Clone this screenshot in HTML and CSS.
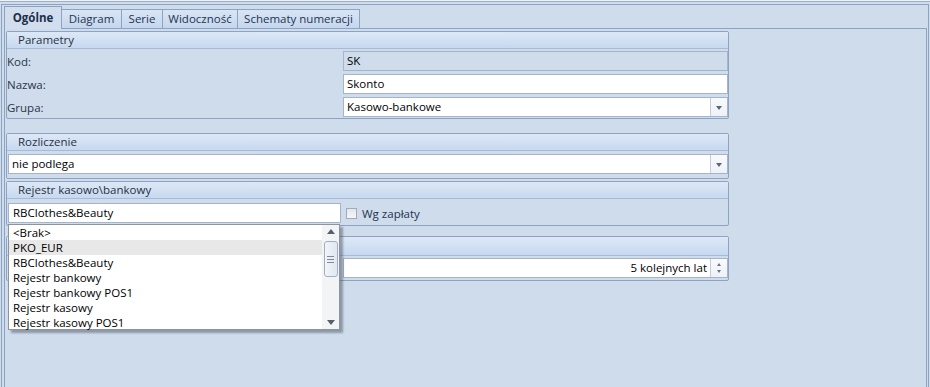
FILE: index.html
```html
<!DOCTYPE html>
<html lang="pl">
<head>
<meta charset="utf-8">
<title>Ogólne</title>
<link rel="stylesheet" href="styles.css">
</head>
<body>
<div class="topline"></div>
<div class="frame">
  <div class="tabs">
    <div class="tab active">Ogólne</div>
    <div class="tab t-diagram">Diagram</div>
    <div class="tab t-serie">Serie</div>
    <div class="tab t-widok">Widoczność</div>
    <div class="tab t-schem">Schematy numeracji</div>
  </div>
  <div class="panel">
    <section class="group g1">
      <div class="ghead">Parametry</div>
      <div class="gbody rows">
        <div class="row"><span class="lbl">Kod:</span><div class="field disabled">SK</div></div>
        <div class="row"><span class="lbl">Nazwa:</span><div class="field">Skonto</div></div>
        <div class="row"><span class="lbl">Grupa:</span><div class="field combo"><span class="val">Kasowo-bankowe</span><span class="btn"><i class="arrow"></i></span></div></div>
      </div>
    </section>
    <section class="group g2">
      <div class="ghead">Rozliczenie</div>
      <div class="gbody">
        <div class="field combo full"><span class="val">nie podlega</span><span class="btn"><i class="arrow"></i></span></div>
      </div>
    </section>
    <section class="group g3">
      <div class="ghead">Rejestr kasowo\bankowy</div>
      <div class="gbody reg">
        <div class="field half">RBClothes&amp;Beauty</div>
        <label class="check"><span class="box"></span><span class="ctext">Wg zapłaty</span></label>
      </div>
    </section>
    <section class="group g4">
      <div class="ghead">&nbsp;</div>
      <div class="gbody rows">
        <div class="row"><span class="lbl"></span><div class="field spin"><span class="val right">5 kolejnych lat</span><span class="btn spinbtn"><i class="up"></i><i class="down"></i></span></div></div>
      </div>
    </section>
  </div>
</div>
<div class="dropdown">
  <ul class="items">
    <li>&lt;Brak&gt;</li>
    <li class="hot">PKO_EUR</li>
    <li>RBClothes&amp;Beauty</li>
    <li>Rejestr bankowy</li>
    <li>Rejestr bankowy POS1</li>
    <li>Rejestr kasowy</li>
    <li>Rejestr kasowy POS1</li>
  </ul>
  <div class="sbar">
    <i class="sup"></i>
    <div class="thumb"><span></span><span></span><span></span></div>
    <i class="sdown"></i>
  </div>
</div>
</body>
</html>
```

FILE: styles.css
```css
* { box-sizing: border-box; }
html, body {
  margin: 0;
  padding: 0;
  width: 930px;
  height: 387px;
  overflow: hidden;
}
body {
  background: #cfdcec;
  font-family: "Open Sans", "Noto Sans", sans-serif;
  font-size: 11.5px;
  color: #000;
  position: relative;
}
.topline {
  height: 2px;
  background: #eef1f5;
  border-bottom: 1px solid #9eafc7;
  margin-bottom: 2px;
}
.frame {
  margin-left: 1px;
  width: 928px;
  height: 383px;
  border: 1px solid #8ea3c2;
  border-bottom: none;
  background: #cfdcec;
}
.tabs {
  display: flex;
  align-items: flex-end;
  height: 23px;
  padding-left: 2px;
}
.tab {
  height: 19px;
  line-height: 17px;
  border: 1px solid #8ea3c2;
  border-bottom: none;
  margin-left: -1px;
  background: linear-gradient(#d9e5f4, #c5d7ee);
  color: #1e3553;
  text-align: center;
  white-space: nowrap;
}
.tab.active {
  margin-left: 0;
  height: 23px;
  line-height: 21px;
  margin-bottom: -1px;
  background: #d2deee;
  position: relative;
  z-index: 2;
  font-weight: 700;
  width: 58px;
  color: #1c2f4a;
}
.t-diagram { width: 61px; }
.t-serie { width: 42px; }
.t-widok { width: 76px; }
.t-schem { width: 123px; }
.panel {
  margin: 0 1px 0 2px;
  width: 923px;
  height: 359px;
  border: 1px solid #8ea3c2;
  border-bottom: none;
  padding: 2px 1px;
  background: #cfdcec;
}
.group {
  width: 723px;
  border: 1px solid #8ea3c2;
  border-radius: 2px;
}
.ghead {
  height: 17px;
  line-height: 16px;
  padding-left: 11px;
  border-bottom: 1px solid #a9bbd4;
  background: linear-gradient(#dde8f6, #c7d9f0);
  color: #27323f;
}
.gbody { padding: 2px 0 1px 1px; }
.rows { display: flex; flex-direction: column; gap: 3px; padding-left: 0; }
.row { display: flex; align-items: center; height: 20px; }
.lbl {
  flex: 0 0 336px;
  color: #283649;
}
.field {
  height: 20px;
  line-height: 18px;
  border: 1px solid #a5b4cb;
  background: #fff;
  padding-left: 3px;
  flex: 1;
  display: flex;
  white-space: nowrap;
}
.field.disabled { background: #cfdcec; }
.combo, .spin { padding-right: 0; }
.val { flex: 1; }
.val.right { text-align: right; padding-right: 3px; }
.btn {
  flex: 0 0 17px;
  border-left: 1px solid #c3ccd8;
  background: linear-gradient(#f8fafc, #eef2f7);
  display: flex;
  align-items: center;
  justify-content: center;
}
.arrow {
  width: 0; height: 0;
  border-left: 3.5px solid transparent;
  border-right: 3.5px solid transparent;
  border-top: 4px solid #5b6674;
  margin-top: 2px;
}
.spinbtn { flex-direction: column; gap: 4px; }
.spinbtn .up {
  width: 0; height: 0;
  border-left: 2.5px solid transparent;
  border-right: 2.5px solid transparent;
  border-bottom: 3px solid #6a7583;
}
.spinbtn .down {
  width: 0; height: 0;
  border-left: 2.5px solid transparent;
  border-right: 2.5px solid transparent;
  border-top: 3px solid #6a7583;
}
.g2 { margin-top: 14px; }
.g2 .gbody { padding: 3px 0 4px 1px; }
.g3 { margin-top: 2px; }
.g3 .gbody { padding: 4px 0 2px 1px; }
.reg { display: flex; align-items: center; }
.field.half { flex: 0 0 333px; padding-left: 4px; }
.check {
  display: flex;
  align-items: center;
  margin-left: 5px;
  color: #22344f;
}
.check .box {
  width: 11px; height: 11px;
  border: 1px solid #a2aab6;
  background: linear-gradient(#e2e6ec, #f4f6f8);
  margin-right: 5px;
}
.g4 { margin-top: 10px; }
.g4 .ghead { height: 19px; }
.g4 .gbody { padding: 2px 0 2px 0; }
.dropdown {
  position: absolute;
  left: 8px;
  top: 224px;
  width: 332px;
  height: 106px;
  border: 1px solid #8f949b;
  background: #fff;
  box-shadow: 3px 3px 2px rgba(60, 70, 85, 0.45);
  display: flex;
  z-index: 5;
}
.items {
  list-style: none;
  margin: 0;
  padding: 0;
  flex: 1;
}
.items li {
  height: 15px;
  line-height: 15px;
  padding-left: 4px;
  color: #000;
  white-space: nowrap;
}
.items li.hot { background: #e8e8e8; }
.sbar {
  flex: 0 0 17px;
  background: #f3f4f6;
  display: flex;
  flex-direction: column;
  align-items: center;
}
.sup {
  margin-top: 4px;
  width: 0; height: 0;
  border-left: 4.5px solid transparent;
  border-right: 4.5px solid transparent;
  border-bottom: 5px solid #56606d;
}
.thumb {
  margin-top: 7px;
  width: 14px;
  height: 36px;
  border: 1px solid #9fb0c6;
  border-radius: 3px;
  background: linear-gradient(90deg, #f2f5f9, #e1e8f1);
  display: flex;
  flex-direction: column;
  align-items: center;
  justify-content: center;
  gap: 2px;
}
.thumb span {
  width: 7px;
  height: 1px;
  background: #7f8a98;
}
.sdown {
  margin-top: auto;
  margin-bottom: 4px;
  width: 0; height: 0;
  border-left: 4.5px solid transparent;
  border-right: 4.5px solid transparent;
  border-top: 5px solid #56606d;
}
```
